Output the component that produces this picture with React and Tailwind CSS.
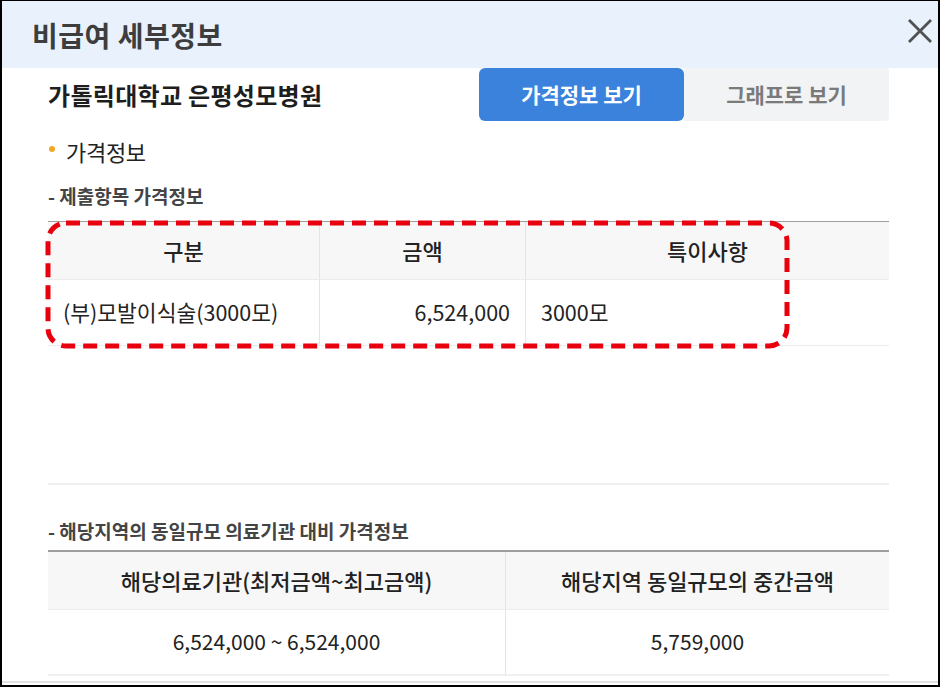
import React from "react";

const F = { fontFamily: '"Noto Sans CJK KR", "Noto Sans", sans-serif' };

export default function App() {
  return (
    <div
      className="w-[940px] h-[687px] overflow-hidden bg-white border-black border-l-2 border-r-2 border-b-2 border-t flex flex-col"
      style={F}
    >
      <div className="h-[67px] shrink-0 bg-[#e9f1fc] flex items-center justify-between pl-[30px] pr-[6px]">
        <h1 className="text-[28px] font-bold text-[#3d3d3d] tracking-[0.5px]">비급여 세부정보</h1>
        <svg width="24" height="24" viewBox="0 0 24 24" className="mt-[-8px]">
          <path d="M1 1 L23 23 M23 1 L1 23" stroke="#505050" strokeWidth="2.8" strokeLinecap="butt" />
        </svg>
      </div>

      <div className="flex-1 flex flex-col pl-[44px] pr-[49px]">
        <div className="flex items-center justify-between h-[53px]">
          <div className="text-[24px] font-bold text-[#1e1e1e] tracking-[0.3px] pl-[2px]">가톨릭대학교 은평성모병원</div>
          <div className="flex self-stretch">
            <div className="w-[205px] bg-[#3b82dc] rounded-[6px] flex items-center justify-center text-white text-[21px] font-bold">
              가격정보 보기
            </div>
            <div className="w-[205px] bg-[#f1f3f5] rounded-r-[4px] flex items-center justify-center text-[#7a7a7a] text-[21px] font-bold">
              그래프로 보기
            </div>
          </div>
        </div>

        <div className="flex items-center gap-[11px] mt-[15px] h-[30px] pl-[3px]">
          <span className="w-[6px] h-[6px] rounded-full bg-[#f5a623] mb-[4px]" />
          <span className="text-[22px] text-[#222] tracking-[-0.3px]">가격정보</span>
        </div>

        <div className="mt-[16px] h-[28px] flex items-center pl-[2px] text-[19px] font-bold text-[#444]">- 제출항목 가격정보</div>

        <div className="relative mt-[11px] ml-[2px]">
          <div className="border-t border-[#9e9e9e]">
            <div className="flex h-[58px] bg-[#f7f7f7] border-b border-[#ececec] text-[22px] text-[#222] font-medium">
              <div className="w-[272px] flex items-center justify-center border-r border-[#e4e4e4]">구분</div>
              <div className="w-[206px] flex items-center justify-center border-r border-[#e4e4e4]">금액</div>
              <div className="flex-1 flex items-center justify-center">특이사항</div>
            </div>
            <div className="flex h-[66px] border-b border-[#ececec] text-[21.5px] text-[#222]">
              <div className="w-[272px] flex items-center pl-[15px] border-r border-[#e4e4e4]">(부)모발이식술(3000모)</div>
              <div className="w-[206px] flex items-center justify-end pr-[15px] border-r border-[#e4e4e4]">6,524,000</div>
              <div className="flex-1 flex items-center pl-[15px]">3000모</div>
            </div>
          </div>
          <svg className="absolute left-[-3px] top-[-1px] pointer-events-none" width="746" height="130" viewBox="0 0 746 130">
            <rect x="3" y="3" width="739" height="123" rx="18" ry="18" fill="none" stroke="#e8000f" strokeWidth="5" strokeDasharray="14 8" />
          </svg>
        </div>

        <div className="mt-[137px] ml-[2px] border-t-2 border-[#f0f0f0]" />

        <div className="mt-[32px] h-[28px] flex items-center pl-[2px] text-[19px] font-bold text-[#444]">- 해당지역의 동일규모 의료기관 대비 가격정보</div>

        <div className="mt-[5px] ml-[2px] border-t-2 border-[#9e9e9e]">
          <div className="flex h-[58px] bg-[#f7f7f7] border-b border-[#ececec] text-[22px] text-[#222] font-medium">
            <div className="w-[458px] flex items-center justify-center border-r border-[#e4e4e4]">해당의료기관(최저금액~최고금액)</div>
            <div className="flex-1 flex items-center justify-center">해당지역 동일규모의 중간금액</div>
          </div>
          <div className="flex h-[66px] border-b-2 border-[#f0f0f0] text-[21px] text-[#222]">
            <div className="w-[458px] flex items-center justify-center border-r border-[#e4e4e4]">6,524,000 ~ 6,524,000</div>
            <div className="flex-1 flex items-center justify-center">5,759,000</div>
          </div>
        </div>
      </div>
      <div className="h-[2px] bg-[#e2e2e2] mb-[2px] shrink-0" />
    </div>
  );
}
